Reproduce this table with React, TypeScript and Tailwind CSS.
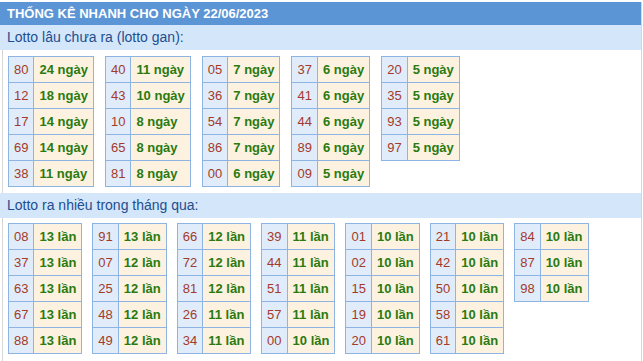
const gan: [string, string][][] = [
  [['80', '24'], ['12', '18'], ['17', '14'], ['69', '14'], ['38', '11']],
  [['40', '11'], ['43', '10'], ['10', '8'], ['65', '8'], ['81', '8']],
  [['05', '7'], ['36', '7'], ['54', '7'], ['86', '7'], ['00', '6']],
  [['37', '6'], ['41', '6'], ['44', '6'], ['89', '6'], ['09', '5']],
  [['20', '5'], ['35', '5'], ['93', '5'], ['97', '5']],
]

const nhieu: [string, string][][] = [
  [['08', '13'], ['37', '13'], ['63', '13'], ['67', '13'], ['88', '13']],
  [['91', '13'], ['07', '12'], ['25', '12'], ['48', '12'], ['49', '12']],
  [['66', '12'], ['72', '12'], ['81', '12'], ['26', '11'], ['34', '11']],
  [['39', '11'], ['44', '11'], ['51', '11'], ['57', '11'], ['00', '10']],
  [['01', '10'], ['02', '10'], ['15', '10'], ['19', '10'], ['20', '10']],
  [['21', '10'], ['42', '10'], ['50', '10'], ['58', '10'], ['61', '10']],
  [['84', '10'], ['87', '10'], ['98', '10']],
]

function LottoTable({ rows, unit }: { rows: [string, string][]; unit: string }) {
  return (
    <table className="border-collapse self-start text-[13px] leading-[15px]">
      <tbody>
        {rows.map(([num, val]) => (
          <tr key={num}>
            <td className="border border-[#8eb4e3] bg-[#e0ecfa] px-[5px] py-[5px] text-[#a33a2a]">{num}</td>
            <td className="border border-[#8eb4e3] bg-[#fdf2e0] px-[5px] py-[5px] font-bold text-[#2a7a10]">
              {val} {unit}
            </td>
          </tr>
        ))}
      </tbody>
    </table>
  )
}

export default function App() {
  return (
    <div className="w-[643px] h-[361px] bg-white pt-[2px] font-['Liberation_Sans',Arial,sans-serif]">
      <div className="w-[642px] border-r border-[#d6d6d6] h-[359px] flex flex-col">
        <div className="h-[23px] bg-[#5b95d5] pl-[7px] flex items-center text-[13px] font-bold text-white">
          THỐNG KÊ NHANH CHO NGÀY 22/06/2023
        </div>
        <div className="h-[25px] bg-[#d4e6fa] pl-[7px] flex items-center text-[14px] text-[#1d4e8f]">
          Lotto lâu chưa ra (lotto gan):
        </div>
        <div className="ml-[2px] border-l border-[#d6d6d6] pl-[5px] pt-[6px] pb-[6px] flex gap-[11px]">
          {gan.map((t, i) => (
            <LottoTable key={i} rows={t} unit="ngày" />
          ))}
        </div>
        <div className="h-[25px] bg-[#d4e6fa] pl-[7px] flex items-center text-[14px] text-[#1d4e8f]">
          Lotto ra nhiều trong tháng qua:
        </div>
        <div className="ml-[2px] border-l border-[#d6d6d6] pl-[5px] pt-[5px] flex-1 flex gap-[10px]">
          {nhieu.map((t, i) => (
            <LottoTable key={i} rows={t} unit="lần" />
          ))}
        </div>
      </div>
    </div>
  )
}
